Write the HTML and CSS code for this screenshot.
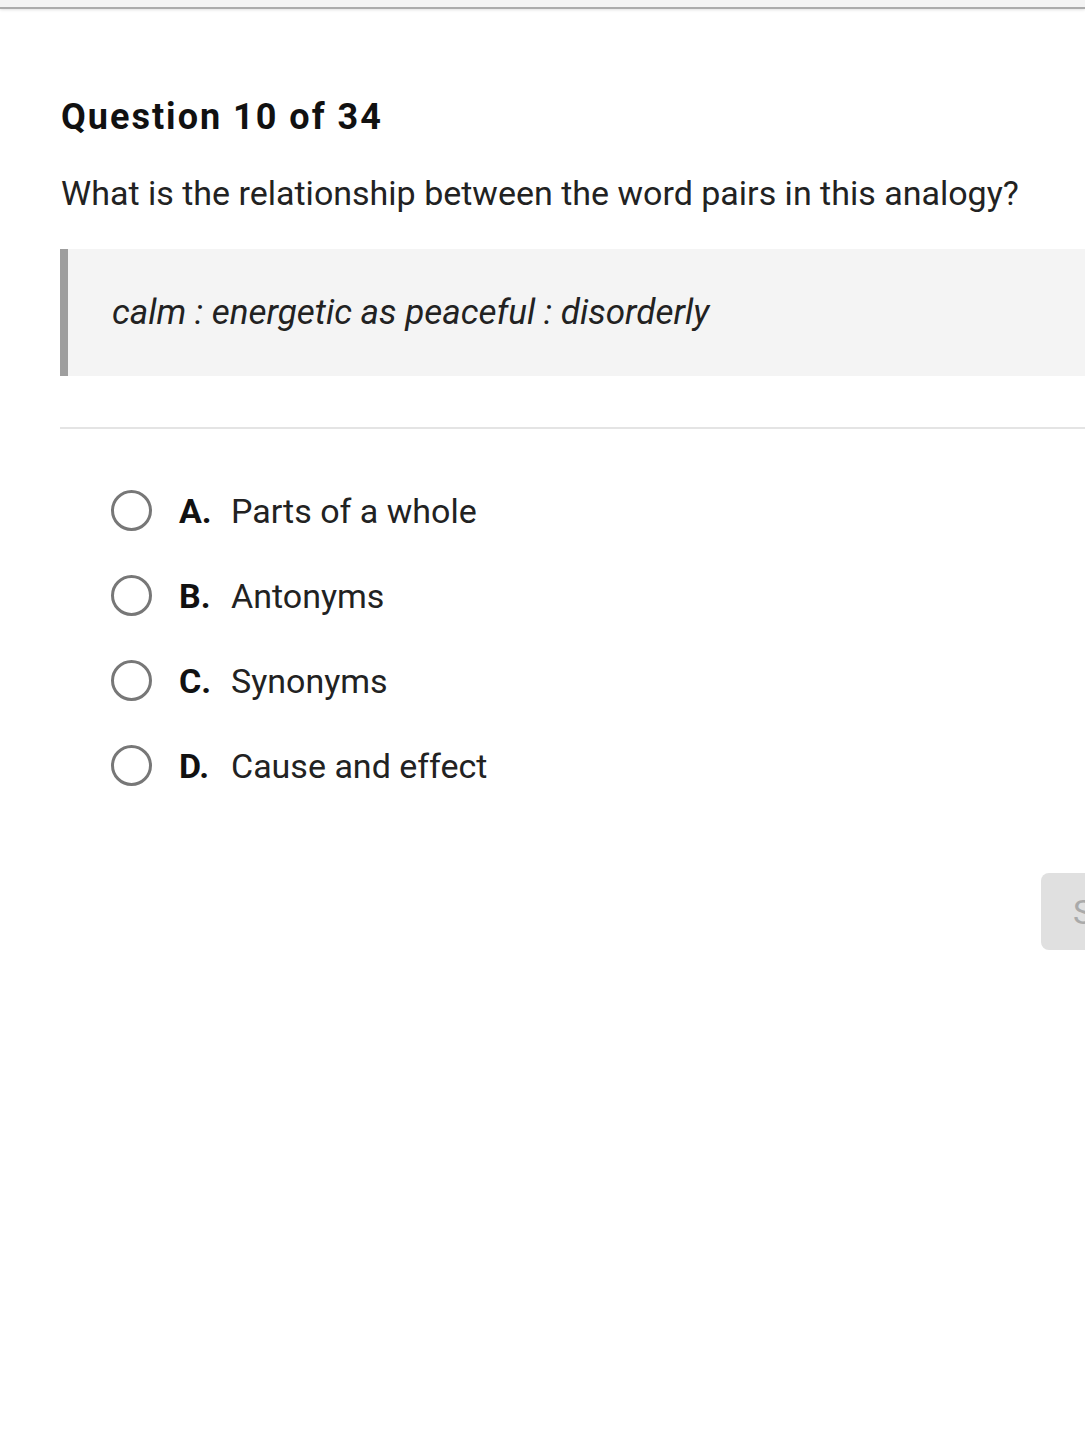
FILE: index.html
```html
<!DOCTYPE html>
<html lang="en">
<head>
    <meta charset="UTF-8">
    <meta name="viewport" content="width=device-width, initial-scale=1.0">
    <title>Question 10 of 34</title>
    <link rel="stylesheet" href="styles.css">
</head>
<body>

    <div class="topbar"></div>

    <div class="page">
        <!-- En-tête de la question -->
        <h1 class="question-count">Question 10 of 34</h1>
        <p class="prompt">What is the relationship between the word pairs in this analogy?</p>

        <div class="analogy">calm : energetic as peaceful : disorderly</div>

        <hr class="divider">

        <!-- Choix de réponse -->
        <ul class="choices">
            <li class="choice"><span class="radio"></span><span class="letter">A.</span><span class="answer">Parts of a whole</span></li>
            <li class="choice"><span class="radio"></span><span class="letter">B.</span><span class="answer">Antonyms</span></li>
            <li class="choice"><span class="radio"></span><span class="letter">C.</span><span class="answer">Synonyms</span></li>
            <li class="choice"><span class="radio"></span><span class="letter">D.</span><span class="answer">Cause and effect</span></li>
        </ul>

        <div class="actions">
            <button class="submit" disabled>SUBMIT</button>
        </div>
    </div>

</body>
</html>
```

FILE: styles.css
```css
/* Police uniforme */
body {
    font-family: Roboto, "Liberation Sans", sans-serif;
    margin: 0;
    background: #fff;
    color: #212121;
    overflow: hidden;
}

/* Barre du haut */
.topbar {
    height: 7px;
    background: #f3f3f3;
    border-bottom: 2px solid #ababab;
    box-shadow: 0 1px 3px rgba(0, 0, 0, 0.12);
}

.page {
    padding: 0 0 0 61px;
}

.question-count {
    margin: 86px 0 0;
    font-size: 36px;
    font-weight: bold;
    letter-spacing: 2px;
    line-height: 44px;
    color: #111;
}

.prompt {
    margin: 32px 0 0;
    font-size: 34px;
    line-height: 44px;
    color: #222;
}

/* Bloc de l'analogie */
.analogy {
    margin: 34px 0 0 -1px;
    padding: 40px 0 40px 44px;
    background: #f4f4f4;
    border-left: 8px solid #9e9e9e;
    font-size: 35px;
    font-style: italic;
    letter-spacing: 0;
    line-height: 47px;
    color: #222;
}

.divider {
    margin: 51px 0 0 -1px;
    border: 0;
    border-top: 2px solid #e4e4e4;
}

/* Liste des choix */
.choices {
    list-style: none;
    margin: 39px 0 0;
    padding: 0 0 0 50px;
}

.choice {
    display: flex;
    align-items: center;
    height: 85px;
    font-size: 34px;
    color: #222;
}

.radio {
    width: 35px;
    height: 35px;
    border: 3.5px solid #777;
    border-radius: 50%;
    flex-shrink: 0;
}

.letter {
    margin-left: 27px;
    width: 52px;
    font-weight: bold;
    color: #111;
}

/* Bouton désactivé */
.actions {
    display: flex;
    justify-content: flex-end;
    margin-top: 65px;
    margin-right: -80px;
}

.submit {
    width: 124px;
    height: 77px;
    border: 0;
    border-radius: 8px;
    background: #e0e0e0;
    color: #aaa;
    font-family: Roboto, sans-serif;
    font-size: 34px;
    text-align: left;
    padding-left: 32px;
}
```
